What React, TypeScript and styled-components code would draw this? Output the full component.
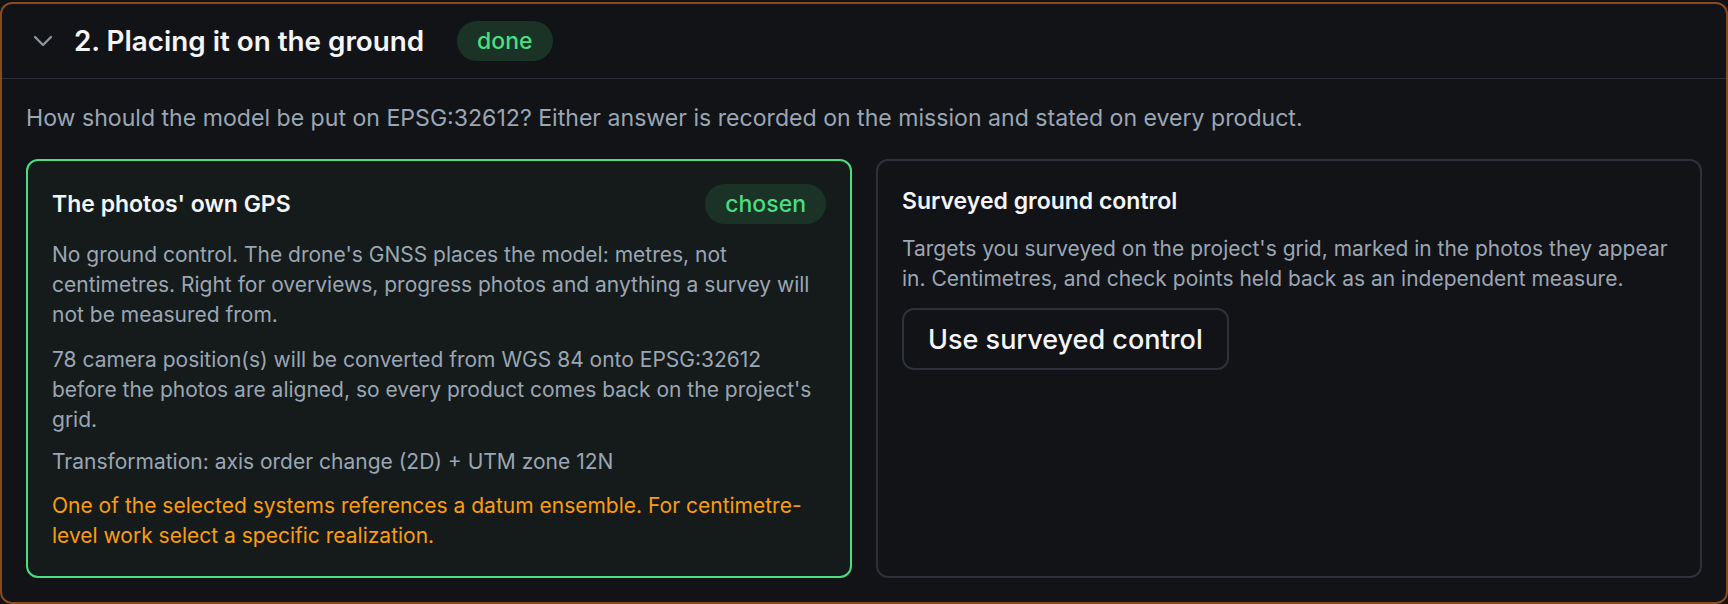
import React from "react";
import styled, { createGlobalStyle } from "styled-components";

const Global = createGlobalStyle`
  html, body { margin: 0; padding: 0; background: #111216; }
  body { font-family: Inter, "Noto Sans", "Liberation Sans", sans-serif; -webkit-font-smoothing: antialiased; }
  * { box-sizing: border-box; }
`;

const Frame = styled.section`
  margin-top: 2px;
  height: 602px;
  border: 2px solid #8b4a1e;
  border-radius: 12px;
  background: #121317;
  display: flex;
  flex-direction: column;
  overflow: hidden;
`;

const Header = styled.header`
  height: 75px;
  flex: none;
  display: flex;
  align-items: center;
  padding-left: 31px;
  border-bottom: 1px solid #2a2f37;
`;

const Chevron = styled.svg`
  width: 20px;
  height: 12px;
  margin-right: 21px;
  color: #8b939e;
`;

const Title = styled.h2`
  margin: 0;
  font-size: 27.8px;
  font-weight: 600;
  color: #f4f5f7;
`;

const Pill = styled.span`
  display: inline-flex;
  align-items: center;
  justify-content: center;
  height: 40px;
  padding: 0 20px;
  border-radius: 20px;
  background: #1b3326;
  color: #4ade80;
  font-size: 23px;
  font-weight: 500;
`;

const HeaderPill = styled(Pill)`
  margin-left: 33px;
`;

const Body = styled.div`
  flex: 1;
  display: flex;
  flex-direction: column;
  padding: 24px 24px 24px 24px;
`;

const Intro = styled.p`
  margin: 0 0 26px 0;
  font-size: 23.1px;
  line-height: 30px;
  color: #9ba6b4;
`;

const Cards = styled.div`
  flex: 1;
  display: grid;
  grid-template-columns: 1fr 1fr;
  gap: 24px;
`;

const Card = styled.div<{ $chosen?: boolean }>`
  border: 2px solid ${(p) => (p.$chosen ? "#4ade80" : "#2d323a")};
  background: ${(p) => (p.$chosen ? "#151b1b" : "#121317")};
  border-radius: 12px;
  padding: 23px 24px 24px 24px;
  display: flex;
  flex-direction: column;
  align-items: flex-start;
`;

const CardHead = styled.div`
  align-self: stretch;
  display: flex;
  align-items: center;
  justify-content: space-between;
  min-height: 34px;
  margin-bottom: 16px;
`;

const CardTitle = styled.h3`
  margin: 0;
  font-size: 23px;
  line-height: 32px;
  font-weight: 600;
  color: #f4f5f7;
`;

const Text = styled.p<{ $warn?: boolean; $gap?: number }>`
  margin: ${(p) => p.$gap ?? 0}px 0 0 0;
  font-size: 21px;
  line-height: 30px;
  color: ${(p) => (p.$warn ? "#fb9d0e" : "#9ba6b4")};
`;

const Button = styled.button`
  margin-top: 14px;
  height: 62px;
  padding: 0 24px;
  border: 2px solid #2d323a;
  border-radius: 12px;
  background: transparent;
  color: #f4f5f7;
  font-family: inherit;
  font-size: 27px;
  font-weight: 500;
  cursor: pointer;
`;

export default function App() {
  return (
    <>
      <Global />
      <Frame>
        <Header>
          <Chevron viewBox="0 0 20 12" fill="none">
            <path d="M2 2l8 8 8-8" stroke="currentColor" strokeWidth="2.4" strokeLinecap="round" strokeLinejoin="round" />
          </Chevron>
          <Title>2. Placing it on the ground</Title>
          <HeaderPill>done</HeaderPill>
        </Header>
        <Body>
          <Intro>
            How should the model be put on EPSG:32612? Either answer is recorded on the mission and stated on every product.
          </Intro>
          <Cards>
            <Card $chosen>
              <CardHead>
                <CardTitle>The photos' own GPS</CardTitle>
                <Pill>chosen</Pill>
              </CardHead>
              <Text>
                No ground control. The drone's GNSS places the model: metres, not centimetres. Right for overviews, progress photos and anything a survey will not be measured from.
              </Text>
              <Text $gap={15}>
                78 camera position(s) will be converted from WGS 84 onto EPSG:32612 before the photos are aligned, so every product comes back on the project's grid.
              </Text>
              <Text $gap={12}>Transformation: axis order change (2D) + UTM zone 12N</Text>
              <Text $warn $gap={14}>
                One of the selected systems references a datum ensemble. For centimetre-level work select a specific realization.
              </Text>
            </Card>
            <Card>
              <CardHead>
                <CardTitle>Surveyed ground control</CardTitle>
              </CardHead>
              <Text>
                Targets you surveyed on the project's grid, marked in the photos they appear in. Centimetres, and check points held back as an independent measure.
              </Text>
              <Button>Use surveyed control</Button>
            </Card>
          </Cards>
        </Body>
      </Frame>
    </>
  );
}
